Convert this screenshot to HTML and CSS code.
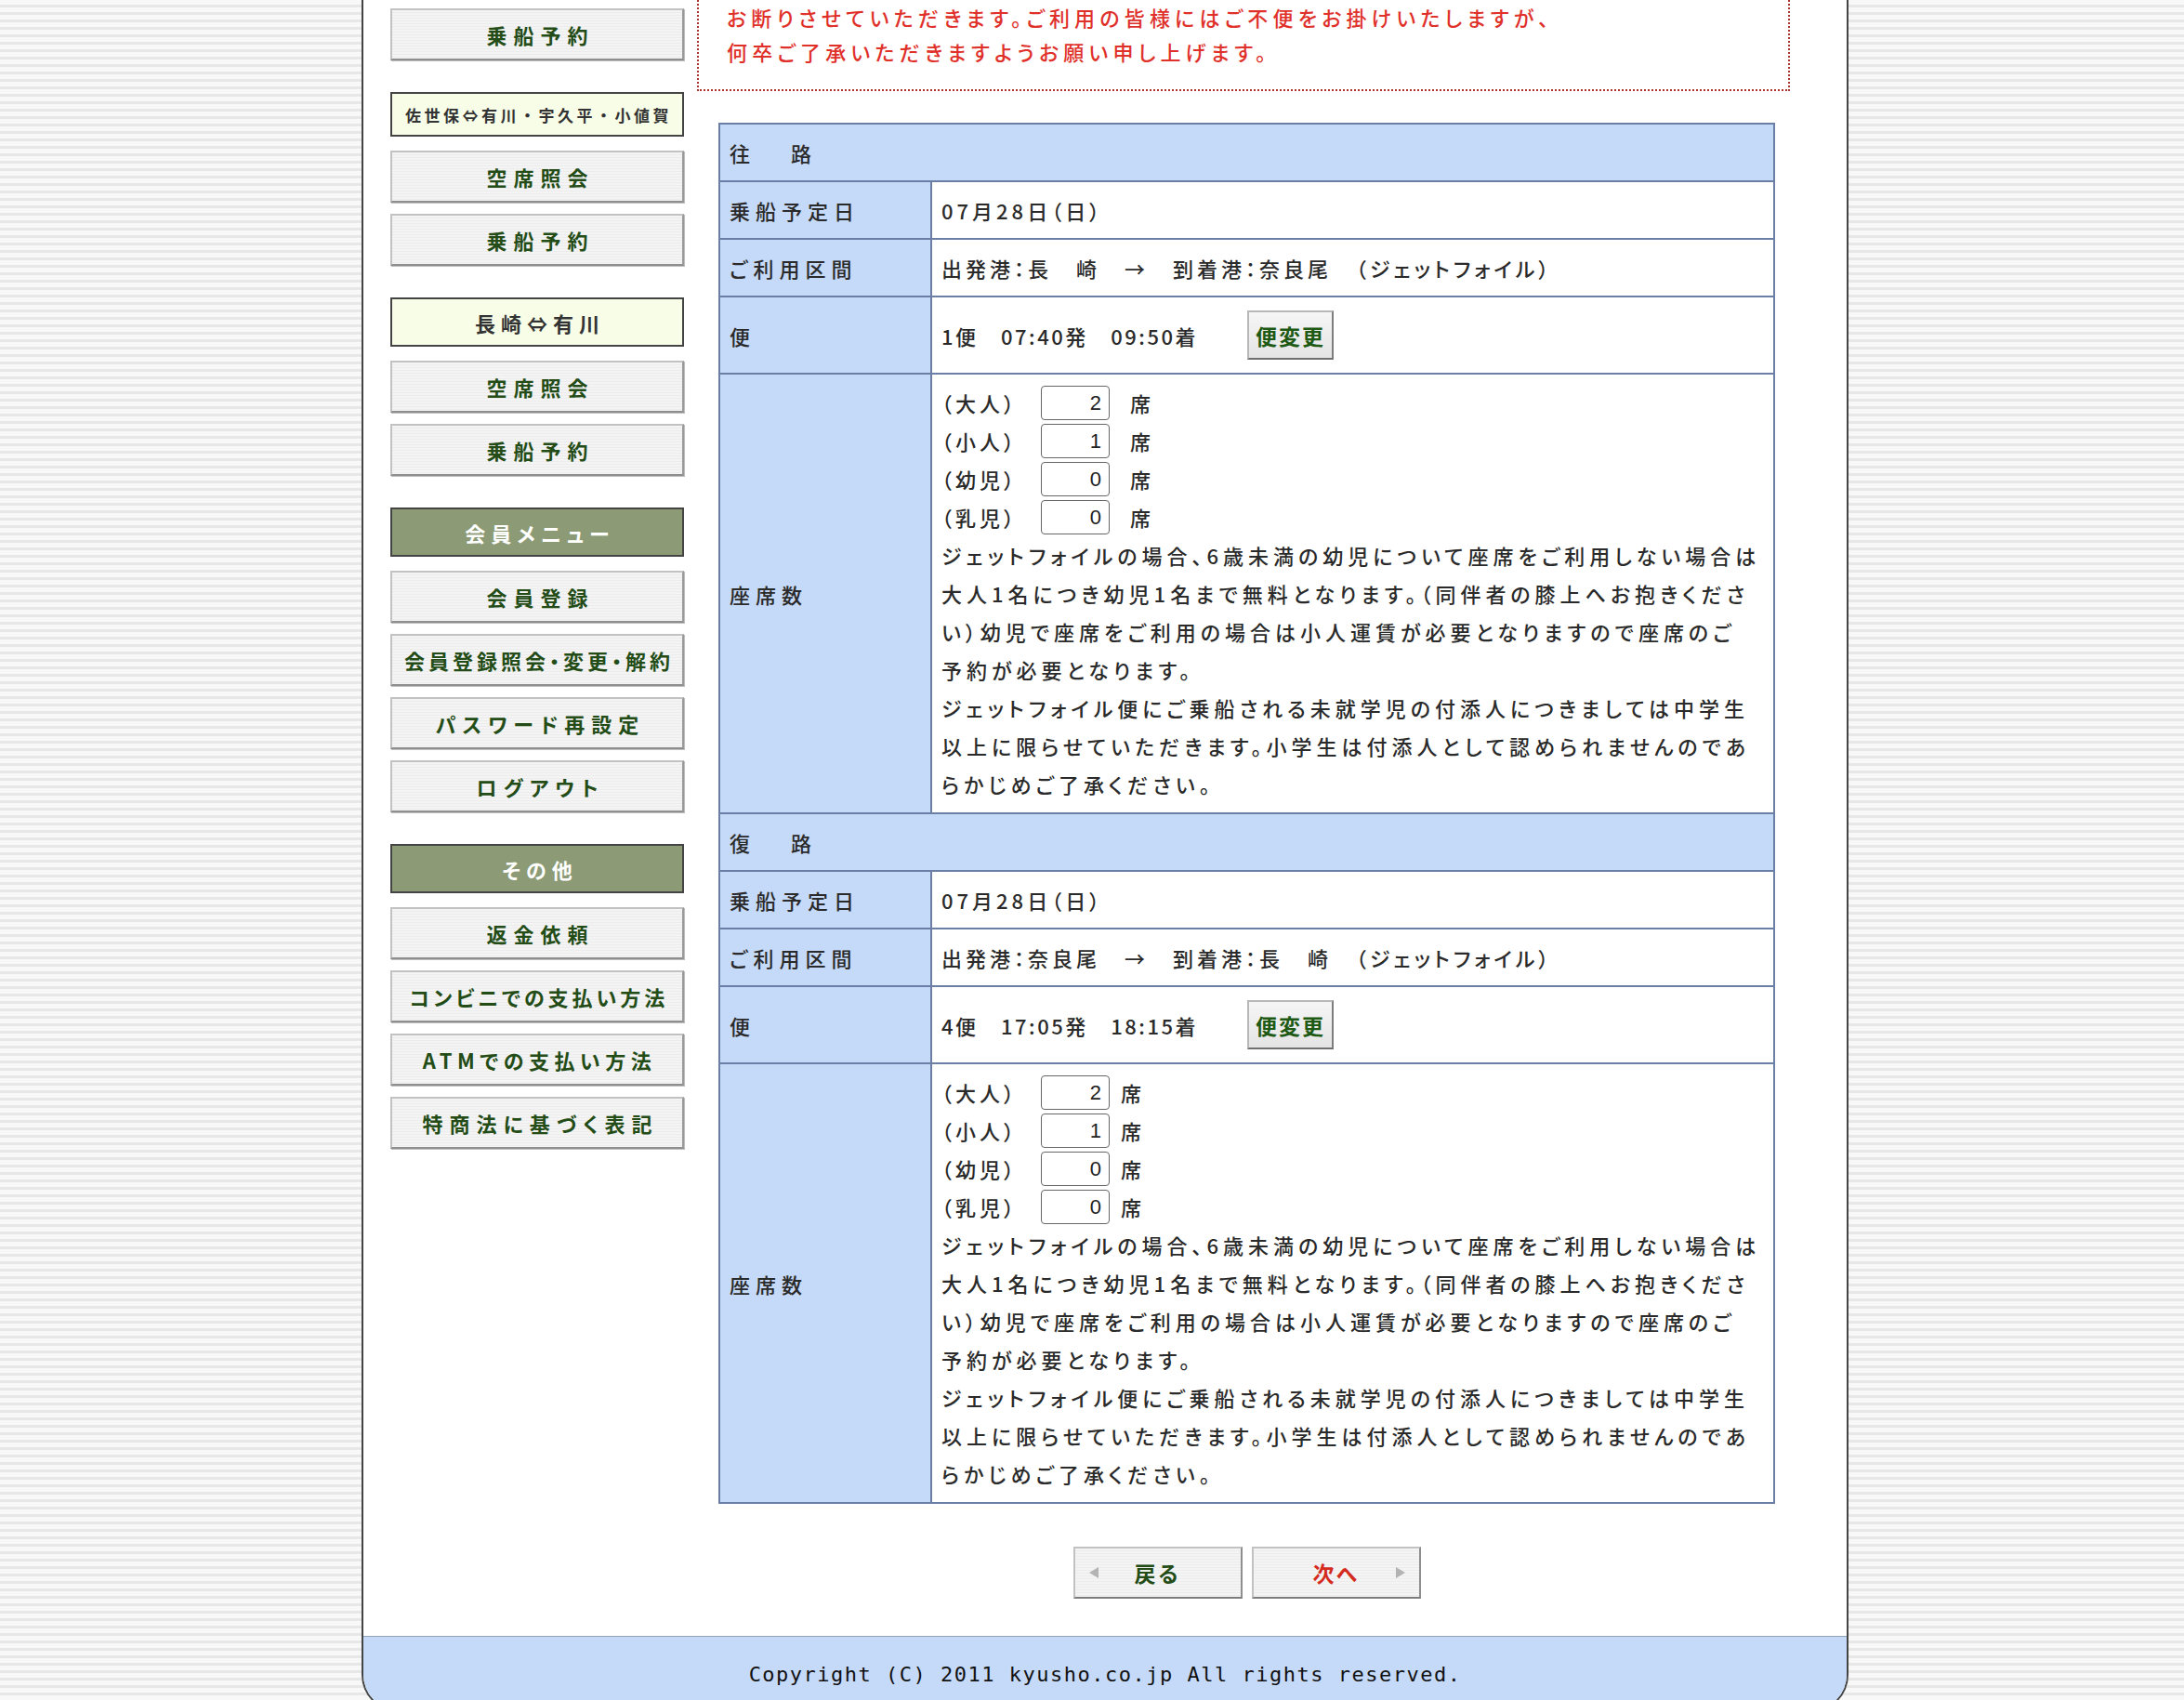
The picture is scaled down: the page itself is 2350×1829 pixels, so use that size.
FILE: index.html
```html
<!DOCTYPE html>
<html lang="ja">
<head>
    <meta charset="UTF-8">
    <title>乗船予約 入力内容確認</title>
    <link rel="stylesheet" href="styles.css">
</head>
<body>
    <div class="page">
        <div class="columns">
            <div class="side">
                <div class="side-group">
                    <a class="side-btn" href="#">乗船予約</a>
                </div>
                <div class="side-group">
                    <div class="side-head side-head-small">佐世保⇔有川・宇久平・小値賀</div>
                    <a class="side-btn" href="#">空席照会</a>
                    <a class="side-btn" href="#">乗船予約</a>
                </div>
                <div class="side-group">
                    <div class="side-head">長崎⇔有川</div>
                    <a class="side-btn" href="#">空席照会</a>
                    <a class="side-btn" href="#">乗船予約</a>
                </div>
                <div class="side-group">
                    <div class="side-head side-head-dark">会員メニュー</div>
                    <a class="side-btn" href="#">会員登録</a>
                    <a class="side-btn side-btn-long" href="#">会員登録照会・変更・解約</a>
                    <a class="side-btn" href="#">パスワード再設定</a>
                    <a class="side-btn" href="#">ログアウト</a>
                </div>
                <div class="side-group">
                    <div class="side-head side-head-dark">その他</div>
                    <a class="side-btn" href="#">返金依頼</a>
                    <a class="side-btn side-btn-long" href="#">コンビニでの支払い方法</a>
                    <a class="side-btn side-btn-mid" href="#">ATMでの支払い方法</a>
                    <a class="side-btn" href="#">特商法に基づく表記</a>
                </div>
            </div>

            <div class="main">
                <div class="notice">
                    お断りさせていただきます。ご利用の皆様にはご不便をお掛けいたしますが、<br>
                    何卒ご了承いただきますようお願い申し上げます。
                </div>

                <div class="booking">
                    <table class="trip">
                        <tr><th colspan="2" class="trip-head">往　路</th></tr>
                        <tr><th>乗船予定日</th><td>07月28日（日）</td></tr>
                        <tr><th>ご利用区間</th><td>出発港：長　崎　→　到着港：奈良尾　（ジェットフォイル）</td></tr>
                        <tr>
                            <th>便</th>
                            <td><span class="bin-time">1便　07:40発　09:50着</span><button class="change-btn">便変更</button></td>
                        </tr>
                        <tr>
                            <th>座席数</th>
                            <td class="seats">
                                <div class="seat-line"><span class="seat-type">（大人）</span><input class="seat-input" type="text" value="2"><span class="seat-unit">席</span></div>
                                <div class="seat-line"><span class="seat-type">（小人）</span><input class="seat-input" type="text" value="1"><span class="seat-unit">席</span></div>
                                <div class="seat-line"><span class="seat-type">（幼児）</span><input class="seat-input" type="text" value="0"><span class="seat-unit">席</span></div>
                                <div class="seat-line"><span class="seat-type">（乳児）</span><input class="seat-input" type="text" value="0"><span class="seat-unit">席</span></div>
                                <p class="seat-note">ジェットフォイルの場合、6歳未満の幼児について座席をご利用しない場合は<br>大人1名につき幼児1名まで無料となります。（同伴者の膝上へお抱きくださ<br>い）幼児で座席をご利用の場合は小人運賃が必要となりますので座席のご<br>予約が必要となります。<br>ジェットフォイル便にご乗船される未就学児の付添人につきましては中学生<br>以上に限らせていただきます。小学生は付添人として認められませんのであ<br>らかじめご了承ください。</p>
                            </td>
                        </tr>
                        <tr><th colspan="2" class="trip-head">復　路</th></tr>
                        <tr><th>乗船予定日</th><td>07月28日（日）</td></tr>
                        <tr><th>ご利用区間</th><td>出発港：奈良尾　→　到着港：長　崎　（ジェットフォイル）</td></tr>
                        <tr>
                            <th>便</th>
                            <td><span class="bin-time">4便　17:05発　18:15着</span><button class="change-btn">便変更</button></td>
                        </tr>
                        <tr>
                            <th>座席数</th>
                            <td class="seats">
                                <div class="seat-line"><span class="seat-type">（大人）</span><input class="seat-input" type="text" value="2"><span class="seat-unit seat-unit-near">席</span></div>
                                <div class="seat-line"><span class="seat-type">（小人）</span><input class="seat-input" type="text" value="1"><span class="seat-unit seat-unit-near">席</span></div>
                                <div class="seat-line"><span class="seat-type">（幼児）</span><input class="seat-input" type="text" value="0"><span class="seat-unit seat-unit-near">席</span></div>
                                <div class="seat-line"><span class="seat-type">（乳児）</span><input class="seat-input" type="text" value="0"><span class="seat-unit seat-unit-near">席</span></div>
                                <p class="seat-note">ジェットフォイルの場合、6歳未満の幼児について座席をご利用しない場合は<br>大人1名につき幼児1名まで無料となります。（同伴者の膝上へお抱きくださ<br>い）幼児で座席をご利用の場合は小人運賃が必要となりますので座席のご<br>予約が必要となります。<br>ジェットフォイル便にご乗船される未就学児の付添人につきましては中学生<br>以上に限らせていただきます。小学生は付添人として認められませんのであ<br>らかじめご了承ください。</p>
                            </td>
                        </tr>
                    </table>

                    <div class="nav">
                        <a class="nav-btn nav-back" href="#">
                            <svg class="nav-arrow" width="12" height="14" viewBox="0 0 12 14"><polygon points="11,1 11,13 1,7" fill="#b3b3b3"/></svg>
                            <span class="nav-label">戻る</span>
                            <span class="nav-spacer"></span>
                        </a>
                        <a class="nav-btn nav-next" href="#">
                            <span class="nav-spacer"></span>
                            <span class="nav-label">次へ</span>
                            <svg class="nav-arrow" width="12" height="14" viewBox="0 0 12 14"><polygon points="1,1 1,13 11,7" fill="#b3b3b3"/></svg>
                        </a>
                    </div>
                </div>
            </div>
        </div>

        <div class="footer">Copyright (C) 2011 kyusho.co.jp All rights reserved.</div>
    </div>
</body>
</html>
```

FILE: styles.css
```css
html {
    overflow: hidden;
}
body {
    margin: 0;
    background: repeating-linear-gradient(to bottom, #f8f8f8 0, #f8f8f8 5px, #e7e7e7 5px, #e7e7e7 8px);
    font-family: "Noto Sans CJK JP", "Noto Sans", sans-serif;
    color: #2a2a2a;
}
a {
    text-decoration: none;
}
.page {
    width: 1596px;
    margin-left: 389px;
    background: #fff;
    border: 2px solid #444;
    border-top: none;
    border-radius: 0 0 40px 40px;
    overflow: hidden;
}
.columns {
    display: flex;
    align-items: flex-start;
}

/* side menu */
.side {
    width: 316px;
    margin-left: 29px;
    padding-top: 9px;
}
.side-group {
    display: flex;
    flex-direction: column;
    margin-bottom: 22px;
}
.side-btn {
    display: flex;
    align-items: center;
    justify-content: center;
    box-sizing: border-box;
    height: 56px;
    margin-bottom: 12px;
    padding-left: 7px;
    background: repeating-linear-gradient(to bottom, #f4f4f4 0, #f4f4f4 2px, #ececec 2px, #ececec 3px);
    border: 2px solid #c2c2c2;
    border-right-color: #9a9a9a;
    border-bottom-color: #8e8e8e;
    box-shadow: 1px 1px 0 #bdbdbd;
    color: #234c17;
    font-size: 22px;
    font-weight: bold;
    letter-spacing: 7px;
    font-feature-settings: "palt";
}
.side-btn-long {
    letter-spacing: 4px;
    padding-left: 4px;
}
.side-btn-mid {
    letter-spacing: 5.5px;
    padding-left: 5px;
}
.side-head {
    display: flex;
    align-items: center;
    justify-content: center;
    box-sizing: border-box;
    height: 53px;
    margin-bottom: 15px;
    padding-left: 6px;
    background: #f7fde7;
    border: 2px solid #444;
    color: #333;
    font-size: 22px;
    font-weight: bold;
    letter-spacing: 6px;
    font-feature-settings: "palt";
}
.side-head-small {
    height: 48px;
    font-size: 17px;
    letter-spacing: 3.5px;
    padding-left: 3px;
    font-feature-settings: normal;
}
.side-head-dark {
    background: #8c9a76;
    color: #fff;
}

/* main column */
.main {
    width: 1176px;
    margin-left: 14px;
}
.notice {
    box-sizing: border-box;
    height: 98px;
    padding: 0 20px 22px 30px;
    border: 2px dotted #a8332e;
    border-top: none;
    color: #e0302a;
    font-size: 22px;
    font-weight: 500;
    line-height: 37px;
    letter-spacing: 5.2px;
    font-feature-settings: "palt";
}
.booking {
    width: 1137px;
    margin: 34px 0 0 23px;
}
.trip {
    width: 100%;
    border-collapse: separate;
    border-spacing: 0;
    border-top: 2px solid #6a7ea6;
    border-left: 2px solid #6a7ea6;
    font-size: 22px;
    font-weight: 500;
    line-height: 40px;
    letter-spacing: 4px;
    font-feature-settings: "palt";
}
.trip th,
.trip td {
    padding: 10px;
    border-right: 2px solid #6a7ea6;
    border-bottom: 2px solid #6a7ea6;
    text-align: left;
    vertical-align: middle;
    font-weight: 500;
}
.trip th {
    width: 206px;
    background: #c5d9f8;
    letter-spacing: 6px;
}
.trip .trip-head {
    letter-spacing: 11px;
}
.bin-time {
    display: inline-block;
    width: 329px;
    vertical-align: middle;
    letter-spacing: 2.5px;
}
.change-btn {
    box-sizing: border-box;
    width: 93px;
    height: 53px;
    margin: 4px 0;
    vertical-align: middle;
    background: linear-gradient(to bottom, #f6f6f6, #e4e4e4);
    border: 2px solid #b8b8b8;
    border-right-color: #7d7d7d;
    border-bottom-color: #6f6f6f;
    color: #1f5a14;
    font-family: inherit;
    font-size: 23px;
    font-weight: bold;
    letter-spacing: 2px;
}
.seats {
    line-height: 41px;
}
.seat-line {
    display: flex;
    align-items: center;
    height: 41px;
}
.seat-type {
    width: 107px;
}
.seat-input {
    box-sizing: border-box;
    width: 74px;
    height: 37px;
    padding: 0 8px 0 0;
    border: 1px solid #666;
    border-radius: 4px;
    text-align: right;
    color: #222;
    font-family: "Liberation Sans", sans-serif;
    font-size: 22px;
}
.seat-unit {
    margin-left: 22px;
}
.seat-unit-near {
    margin-left: 12px;
}
.seat-note {
    margin: 0;
    white-space: nowrap;
    letter-spacing: 5px;
}

/* back / next */
.nav {
    display: flex;
    justify-content: center;
    gap: 10px;
    margin-top: 46px;
    padding-bottom: 40px;
}
.nav-btn {
    display: flex;
    align-items: center;
    box-sizing: border-box;
    width: 182px;
    height: 56px;
    padding: 0 14px;
    background: repeating-linear-gradient(to bottom, #f4f4f4 0, #f4f4f4 2px, #ececec 2px, #ececec 3px);
    border: 2px solid #c2c2c2;
    border-right-color: #8e8e8e;
    border-bottom-color: #7c7c7c;
    font-size: 23px;
    font-weight: bold;
    letter-spacing: 2px;
}
.nav-label {
    flex: 1;
    text-align: center;
}
.nav-spacer {
    width: 12px;
}
.nav-back {
    color: #234c17;
}
.nav-next {
    color: #d42b1e;
}

.footer {
    height: 80px;
    box-sizing: border-box;
    padding-top: 27px;
    background: #c5d9f8;
    border-top: 1px solid #93a3b6;
    text-align: center;
    color: #111;
    font-family: "DejaVu Sans Mono", monospace;
    font-size: 22px;
    line-height: 28px;
    letter-spacing: 1.5px;
}
```
